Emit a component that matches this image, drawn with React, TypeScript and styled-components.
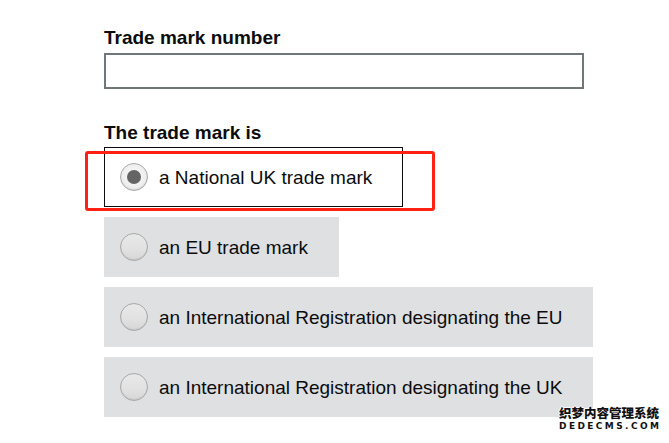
import styled, { createGlobalStyle } from 'styled-components'

const GlobalStyle = createGlobalStyle`
  html, body {
    margin: 0;
    padding: 0;
    background: #ffffff;
  }
  * {
    box-sizing: border-box;
  }
`

const Page = styled.main`
  position: relative;
  min-height: 443px;
  padding: 25px 0 0 104px;
  font-family: 'Liberation Sans', Arial, sans-serif;
  color: #0b0c0c;
`

const Field = styled.div`
  display: flex;
  flex-direction: column;
  align-items: flex-start;
`

const Label = styled.label`
  display: block;
  font-size: 19px;
  font-weight: 700;
  line-height: 25px;
  margin-bottom: 3px;
`

const TextInput = styled.input`
  width: 480px;
  height: 36px;
  margin: 0;
  padding: 4px;
  border: 2px solid #6f777b;
  border-radius: 0;
  font-family: inherit;
  font-size: 19px;
  outline: none;
`

const Fieldset = styled.fieldset`
  margin: 31px 0 0;
  padding: 0;
  border: 0;
  min-width: 0;
`

const Legend = styled.legend`
  padding: 0;
  font-size: 19px;
  font-weight: 700;
  line-height: 25px;
  margin-bottom: 2px;
`

const OptionList = styled.div`
  display: flex;
  flex-direction: column;
  align-items: flex-start;
  gap: 10px;
`

const Option = styled.label<{ $selected?: boolean }>`
  display: flex;
  align-items: center;
  gap: 11px;
  padding: 15px 30px 15px 15px;
  background: ${({ $selected }) => ($selected ? '#ffffff' : '#dee0e2')};
  border: 1px solid ${({ $selected }) => ($selected ? '#0b0c0c' : '#dee0e2')};
  font-size: 19px;
  line-height: 28px;
  cursor: pointer;
`

const OptionText = styled.span`
  padding-top: 2px;
  line-height: 26px;
`

const Radio = styled.span<{ $checked?: boolean }>`
  position: relative;
  flex: none;
  width: 28px;
  height: 28px;
  border-radius: 50%;
  border: 1px solid #a8a8a8;
  background: ${({ $checked }) =>
    $checked
      ? 'radial-gradient(circle at 50% 45%, #fbfbfb 0%, #eeeeee 60%, #dcdcdc 100%)'
      : 'linear-gradient(180deg, #e9e9e9 0%, #e1e1e1 60%, #d6d6d6 100%)'};
  box-shadow: inset 0 -1px 1px rgba(0, 0, 0, 0.08);

  &::after {
    content: '';
    display: ${({ $checked }) => ($checked ? 'block' : 'none')};
    position: absolute;
    left: 6px;
    top: 6px;
    width: 14px;
    height: 14px;
    border-radius: 50%;
    background: #646464;
  }
`

const Highlight = styled.div`
  position: absolute;
  left: 85px;
  top: 151px;
  width: 350px;
  height: 60px;
  border: 3px solid #ff2114;
  border-radius: 3px;
  pointer-events: none;
`

const Watermark = styled.div`
  position: absolute;
  left: 558px;
  top: 405px;
  width: 102px;
  display: flex;
  flex-direction: column;
  align-items: center;
  pointer-events: none;
`

const WatermarkCn = styled.span`
  font-family: 'Noto Sans CJK SC', sans-serif;
  font-size: 12.5px;
  font-weight: 900;
  line-height: 16px;
  color: #111111;
  text-shadow: 1px 0 #fff, -1px 0 #fff, 0 1px #fff, 0 -1px #fff;
`

const WatermarkEn = styled.span`
  font-family: 'DejaVu Sans', sans-serif;
  font-size: 9px;
  font-weight: 700;
  line-height: 11px;
  letter-spacing: 2.4px;
  margin-right: -2.4px;
  color: #111111;
  text-shadow: 1px 0 #fff, -1px 0 #fff, 0 1px #fff, 0 -1px #fff;
`

const options = [
  { id: 'national', text: 'a National UK trade mark' },
  { id: 'eu', text: 'an EU trade mark' },
  { id: 'ir-eu', text: 'an International Registration designating the EU' },
  { id: 'ir-uk', text: 'an International Registration designating the UK' },
]

export default function App() {
  const selected = 'national'

  return (
    <>
      <GlobalStyle />
      <Page>
        <Field>
          <Label htmlFor="tm-number">Trade mark number</Label>
          <TextInput id="tm-number" type="text" />
        </Field>

        <Fieldset>
          <Legend>The trade mark is</Legend>
          <OptionList>
            {options.map((o) => (
              <Option key={o.id} $selected={o.id === selected}>
                <Radio $checked={o.id === selected} />
                <OptionText>{o.text}</OptionText>
              </Option>
            ))}
          </OptionList>
        </Fieldset>

        <Highlight />
        <Watermark>
          <WatermarkCn>织梦内容管理系统</WatermarkCn>
          <WatermarkEn>DEDECMS.COM</WatermarkEn>
        </Watermark>
      </Page>
    </>
  )
}
